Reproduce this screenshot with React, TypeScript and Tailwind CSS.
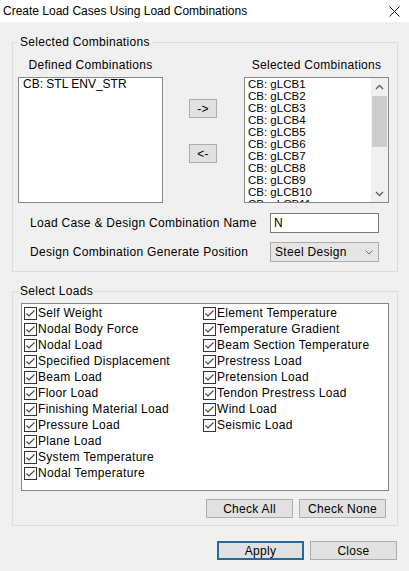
import React from "react";

const LEFT_LOADS = [
  "Self Weight",
  "Nodal Body Force",
  "Nodal Load",
  "Specified Displacement",
  "Beam Load",
  "Floor Load",
  "Finishing Material Load",
  "Pressure Load",
  "Plane Load",
  "System Temperature",
  "Nodal Temperature",
];

const RIGHT_LOADS = [
  "Element Temperature",
  "Temperature Gradient",
  "Beam Section Temperature",
  "Prestress Load",
  "Pretension Load",
  "Tendon Prestress Load",
  "Wind Load",
  "Seismic Load",
];

const SELECTED = Array.from({ length: 11 }, (_, i) => `CB: gLCB${i + 1}`);

function Btn({ label, className = "" }: { label: string; className?: string }) {
  return (
    <div
      className={`flex h-[19px] items-center justify-center border border-[#adadad] bg-[#e1e1e1] ${className}`}
    >
      {label}
    </div>
  );
}

function Check({ label }: { label: string }) {
  return (
    <div className="flex h-[16px] items-center">
      <span className="flex h-[13px] w-[13px] shrink-0 items-center justify-center border border-[#333333] bg-white">
        <svg width="11" height="11" viewBox="0 0 11 11">
          <polyline
            points="1.5,5.5 4,8 9.5,2.5"
            fill="none"
            stroke="#4a4a4a"
            strokeWidth="1.2"
          />
        </svg>
      </span>
      <span className="ml-[1px] whitespace-nowrap">{label}</span>
    </div>
  );
}

export default function App() {
  return (
    <div className="h-[571px] w-[409px] overflow-hidden bg-[#f0f0f0] font-['Liberation_Sans',Arial,sans-serif] text-[12px] leading-[14px] tracking-[0.3px] text-black">
      {/* title bar */}
      <div className="flex h-[22px] items-center justify-between bg-white pl-[3px] pr-[9px] tracking-normal">
        <span>Create Load Cases Using Load Combinations</span>
        <svg width="11" height="11" viewBox="0 0 11 11">
          <path d="M0.5 0.5 L10.5 10.5 M10.5 0.5 L0.5 10.5" stroke="#111" strokeWidth="1" />
        </svg>
      </div>

      {/* Selected Combinations */}
      <fieldset className="ml-[12px] mt-[13px] w-[386px] border border-[#dcdcdc] pb-[9px]">
        <legend className="ml-[5px] px-[2px] leading-[14px]">Selected Combinations</legend>

        <div className="flex">
          <div className="ml-[5px] w-[145px]">
            <div className="mt-[9px] whitespace-nowrap text-center">Defined Combinations</div>
            <div className="mt-[5px] h-[126px] border border-[#828790] bg-white pl-[4px] leading-[12px] tracking-normal">
              CB: STL ENV_STR
            </div>
          </div>

          <div className="ml-[26px] flex w-[28px] flex-col">
            <Btn label="->" className="mt-[50px]" />
            <Btn label="<-" className="mt-[26px]" />
          </div>

          <div className="ml-[27px] w-[145px]">
            <div className="mt-[9px] whitespace-nowrap text-center">Selected Combinations</div>
            <div className="mt-[5px] flex h-[126px] border border-[#828790] bg-white">
              <div className="flex-1 overflow-hidden pl-[3px] text-[11.5px] leading-[12px] tracking-normal">
                {SELECTED.map((s) => (
                  <div key={s} className="h-[12px] whitespace-nowrap">
                    {s}
                  </div>
                ))}
              </div>
              <div className="flex w-[17px] flex-col bg-[#f0f0f0]">
                <div className="flex h-[17px] items-center justify-center">
                  <svg width="9" height="6" viewBox="0 0 9 6">
                    <polyline points="1,5 4.5,1.5 8,5" fill="none" stroke="#606060" strokeWidth="1.4" />
                  </svg>
                </div>
                <div className="mx-[1px] mt-[1px] h-[51px] bg-[#cdcdcd]" />
                <div className="flex-1" />
                <div className="flex h-[17px] items-center justify-center">
                  <svg width="9" height="6" viewBox="0 0 9 6">
                    <polyline points="1,1 4.5,4.5 8,1" fill="none" stroke="#606060" strokeWidth="1.4" />
                  </svg>
                </div>
              </div>
            </div>
          </div>
        </div>

        <div className="mt-[10px] flex h-[20px] items-center">
          <span className="ml-[17px] w-[240px] whitespace-nowrap">Load Case &amp; Design Combination Name</span>
          <div className="flex h-[20px] w-[109px] items-center border border-[#7a7a7a] bg-white pl-[3px]">
            N
          </div>
        </div>
        <div className="mt-[9px] flex h-[20px] items-center">
          <span className="ml-[17px] w-[240px] whitespace-nowrap">Design Combination Generate Position</span>
          <div className="flex h-[20px] w-[109px] items-center justify-between border border-[#acacac] bg-[#e5e5e5] pl-[4px] pr-[5px]">
            <span>Steel Design</span>
            <svg width="8" height="5" viewBox="0 0 8 5">
              <polyline points="0.5,0.5 4,4 7.5,0.5" fill="none" stroke="#707070" strokeWidth="1" />
            </svg>
          </div>
        </div>
      </fieldset>

      {/* Select Loads */}
      <fieldset className="ml-[12px] mt-[12px] w-[386px] border border-[#dcdcdc] pb-[7px]">
        <legend className="ml-[5px] px-[2px] leading-[14px]">Select Loads</legend>

        <div className="ml-[8px] mt-[5px] flex h-[188px] w-[368px] border border-[#828790] bg-white pl-[2px] pt-[1px]">
          <div className="flex w-[179px] flex-col">
            {LEFT_LOADS.map((l) => (
              <Check key={l} label={l} />
            ))}
          </div>
          <div className="flex flex-col">
            {RIGHT_LOADS.map((l) => (
              <Check key={l} label={l} />
            ))}
          </div>
        </div>

        <div className="mt-[8px] flex justify-end gap-[6px] pr-[11px]">
          <Btn label="Check All" className="w-[87px]" />
          <Btn label="Check None" className="w-[87px]" />
        </div>
      </fieldset>

      <div className="mt-[15px] flex justify-end gap-[6px] pr-[12px]">
        <div className="flex h-[19px] w-[87px] items-center justify-center border-2 border-[#26699b] bg-[#e1e1e1]">
          Apply
        </div>
        <Btn label="Close" className="w-[87px]" />
      </div>
    </div>
  );
}
